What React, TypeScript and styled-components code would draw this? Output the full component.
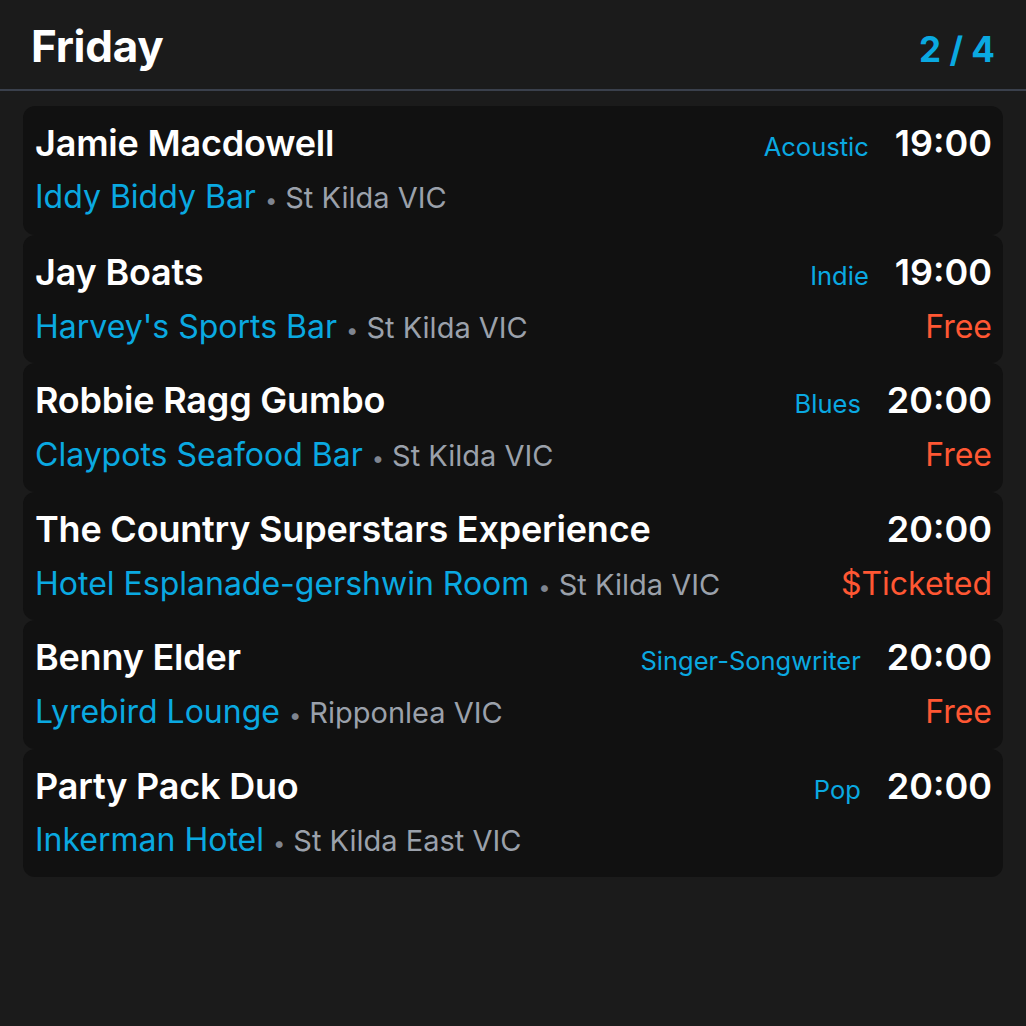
import React from "react";
import styled, { createGlobalStyle } from "styled-components";

const Global = createGlobalStyle`
  html, body { margin: 0; padding: 0; background: #1b1b1b; }
  body { font-family: Inter, "Noto Sans", sans-serif; -webkit-font-smoothing: antialiased; }
`;

const Page = styled.div`
  width: 1026px;
  min-height: 1026px;
  background: #1b1b1b;
`;

const Header = styled.header`
  display: flex;
  align-items: baseline;
  justify-content: space-between;
  height: 91px;
  box-sizing: border-box;
  padding: 20px 31px 0 31px;
  border-bottom: 2px solid #3a404c;
`;

const Title = styled.h1`
  margin: 0;
  font-size: 44px;
  line-height: 52px;
  font-weight: 700;
  color: #ffffff;
  letter-spacing: -0.3px;
`;

const Pager = styled.span`
  font-size: 35px;
  font-weight: 700;
  color: #0aa9e1;
  letter-spacing: 0;
`;

const List = styled.div`
  display: flex;
  flex-direction: column;
  padding: 15px 23px 0 23px;
`;

const Card = styled.div`
  display: flex;
  flex-direction: column;
  gap: 13px;
  height: 128.5px;
  box-sizing: border-box;
  padding: 15px 11px 0 12px;
  background: #111111;
  border-radius: 12px;
`;

const Row = styled.div`
  display: flex;
  align-items: baseline;
  justify-content: space-between;
  gap: 20px;
`;

const Name = styled.div`
  font-size: 36px;
  line-height: 44px;
  font-weight: 600;
  color: #ffffff;
  white-space: nowrap;
  letter-spacing: -0.2px;
`;

const Right = styled.div`
  display: flex;
  align-items: baseline;
  gap: 26px;
`;

const Genre = styled.span`
  font-size: 25.5px;
  color: #0aa9e1;
`;

const Time = styled.span`
  font-size: 36px;
  font-weight: 600;
  color: #ffffff;
  letter-spacing: 0;
`;

const Where = styled.div`
  display: flex;
  align-items: baseline;
  line-height: 38px;
  white-space: nowrap;
`;

const Venue = styled.span`
  font-size: 32px;
  color: #0aa9e1;
`;

const Dot = styled.span`
  font-size: 22px;
  color: #7f8590;
  margin: 0 8px 0 9px;
`;

const Place = styled.span`
  font-size: 29px;
  color: #9ba1ab;
`;

const Price = styled.span`
  font-size: 32px;
  color: #ff5733;
`;

type Gig = {
  name: string;
  genre?: string;
  time: string;
  venue: string;
  place: string;
  price?: string;
};

const gigs: Gig[] = [
  { name: "Jamie Macdowell", genre: "Acoustic", time: "19:00", venue: "Iddy Biddy Bar", place: "St Kilda VIC" },
  { name: "Jay Boats", genre: "Indie", time: "19:00", venue: "Harvey's Sports Bar", place: "St Kilda VIC", price: "Free" },
  { name: "Robbie Ragg Gumbo", genre: "Blues", time: "20:00", venue: "Claypots Seafood Bar", place: "St Kilda VIC", price: "Free" },
  { name: "The Country Superstars Experience", time: "20:00", venue: "Hotel Esplanade-gershwin Room", place: "St Kilda VIC", price: "$Ticketed" },
  { name: "Benny Elder", genre: "Singer-Songwriter", time: "20:00", venue: "Lyrebird Lounge", place: "Ripponlea VIC", price: "Free" },
  { name: "Party Pack Duo", genre: "Pop", time: "20:00", venue: "Inkerman Hotel", place: "St Kilda East VIC" },
];

export default function App() {
  return (
    <Page>
      <Global />
      <Header>
        <Title>Friday</Title>
        <Pager>2 / 4</Pager>
      </Header>
      <List>
        {gigs.map((g) => (
          <Card key={g.name}>
            <Row>
              <Name>{g.name}</Name>
              <Right>
                {g.genre && <Genre>{g.genre}</Genre>}
                <Time>{g.time}</Time>
              </Right>
            </Row>
            <Row>
              <Where>
                <Venue>{g.venue}</Venue>
                <Dot>•</Dot>
                <Place>{g.place}</Place>
              </Where>
              {g.price && <Price>{g.price}</Price>}
            </Row>
          </Card>
        ))}
      </List>
    </Page>
  );
}
